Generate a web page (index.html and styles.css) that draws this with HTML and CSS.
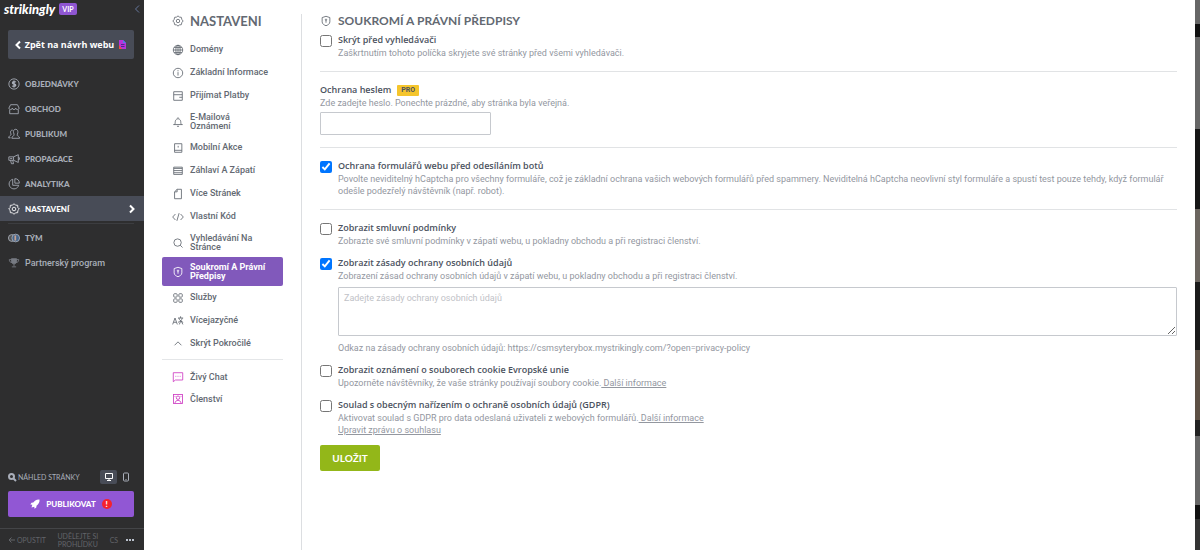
FILE: index.html
```html
<!DOCTYPE html>
<html lang="cs">
<head>
  <meta charset="UTF-8">
  <meta name="viewport" content="width=device-width, initial-scale=1.0">
  <title>Nastavení – Strikingly</title>
  <link rel="stylesheet" href="styles.css">
</head>
<body>
  <div class="app">
    <!-- Sidebar -->
    <aside class="sidebar">
      <div class="brand">
        <span class="logo">strikingly</span>
        <span class="vip">VIP</span>
        <button class="collapse" aria-label="Sbalit">
          <svg width="6" height="10" viewBox="0 0 6 10"><path d="M5 1.500L1.500 5L5 8.500"/></svg>
        </button>
      </div>
      <a class="back" href="#">
        <svg class="arrow" width="6" height="10" viewBox="0 0 6 10"><path d="M5 1.500L1.500 5L5 8.500"/></svg>
        Zpět na návrh webu
        <svg class="page" width="9" height="11" viewBox="0 0 9 11"><path d="M1 1H5L8 4V10H1Z" fill="#b832d8"/><path d="M5 1L8 4H5Z" fill="#4d7ff0"/><path d="M1 6L4 10H1Z" fill="#f0503c"/><path d="M3 5H6.500V6H3ZM3 7H6.500V8H3Z" fill="#4a2a90"/></svg>
      </a>
      <nav class="menu">
        <a href="#"><svg class="ico" viewBox="0 0 14 14"><circle cx="7" cy="7" r="6"/><path stroke-width="1.600" d="M9 5C8.500 4 5.200 3.900 5.200 5.700C5.200 7.400 9 6.600 9 8.400C9 10.200 5.500 10 5 9M7 3V11"/></svg>OBJEDNÁVKY</a>
        <a href="#"><svg class="ico" viewBox="0 0 14 14"><path d="M3 2H11L13 6C13 8.200 9 8.200 9 6C9 8.200 5 8.200 5 6C5 8.200 1 8.200 1 6ZM2 8V12.500H12V8"/></svg>OBCHOD</a>
        <a href="#"><svg class="ico" viewBox="0 0 14 14"><path d="M9 1.500C6.500 1.500 6 4 6.500 5.500C7 7 7.300 7.300 7 8.500C6.500 9.500 4.500 9.500 4.500 12H13.500C13.500 9.500 11 9.500 10.700 8.500C10.500 7.500 11.300 7 11.500 5.500C11.700 3.500 11 1.500 9 1.500M5.500 2.500C3.500 2.200 2.700 4 3 5.500C3.200 6.700 3.700 7 3.500 8C3 9 1 9 .8 11.500H3"/></svg>PUBLIKUM</a>
        <a href="#"><svg class="ico" viewBox="0 0 14 14"><path d="M1 4.500H6.500L12 2V11L6.500 8.500H1ZM6.500 4.500V8.500M3 8.500L4 12.500H6.500L5.500 8.500M12 5.500H13.300V7.500H12M2.500 6.500H5"/></svg>PROPAGACE</a>
        <a href="#"><svg class="ico" viewBox="0 0 14 14"><path d="M5.500 1.500A5.700 5.700 0 1 0 12.500 8.500H5.500ZM8 .8V6H13.200A5.300 5.300 0 0 0 8 .8"/></svg>ANALYTIKA</a>
        <a class="active" href="#"><svg class="ico" viewBox="0 0 14 14"><path d="M7 .8L8.700 2.500L11.300 2.700L11.500 5.300L13.200 7L11.500 8.700L11.300 11.300L8.700 11.500L7 13.200L5.300 11.500L2.700 11.300L2.500 8.700L.8 7L2.500 5.300L2.700 2.700L5.300 2.500Z"/><circle cx="7" cy="7" r="2.100"/></svg>NASTAVENÍ<svg class="arrow" width="6" height="10" viewBox="0 0 6 10"><path d="M1 1.500L4.500 5L1 8.500"/></svg></a>
      </nav>
      <nav class="menu team">
        <a href="#"><svg class="ico" viewBox="0 0 14 14"><circle cx="4.500" cy="7" r="4" fill="#555"/><circle cx="9" cy="7" r="4.500" fill="#45668c"/><path stroke="#c9a18e" stroke-width="2" d="M8.500 4V10"/></svg>TÝM</a>
        <a class="plain" href="#"><svg class="ico dim" viewBox="0 0 14 14"><path fill="#777b83" d="M4 2H10V5C10 9 4 9 4 5Z"/><path d="M4 3H1.500C1.500 5.500 3 6.500 4.500 6.500M10 3H12.500C12.500 5.500 11 6.500 9.500 6.500M7 8V11M4.500 11.500H9.500"/></svg>Partnerský program</a>
      </nav>
      <div class="bottom">
        <div class="preview">
          <svg class="search" width="9" height="9" viewBox="0 0 9 9"><circle cx="3.500" cy="3.500" r="2.500"/><path d="M5.500 5.500L8 8"/></svg>
          <span>NÁHLED STRÁNKY</span>
          <button class="device on" aria-label="Počítač"><svg width="10" height="10" viewBox="0 0 10 10"><path d="M1.500 1.500H8.500V6.500H1.500ZM3 8.500H7M5 6.500V8.500"/></svg></button>
          <button class="device" aria-label="Mobil"><svg width="8" height="10" viewBox="0 0 8 10"><rect x="1.500" y="1" width="5" height="8" rx="1"/><path d="M3.500 7.500H4.500"/></svg></button>
        </div>
        <button class="publish">
          <svg width="10" height="10" viewBox="0 0 10 10"><path fill="#fff" d="M9.500 .5C6 .3 4.500 2 3.300 3.500L1.500 3.700L.3 5.500L2.300 5.700L1.500 8.500L4.300 7.700L4.500 9.700L6.300 8.500L6.500 6.700C8.500 5 9.800 3.500 9.500 .5Z"/></svg>
          PUBLIKOVAT
          <span class="alert">!</span>
        </button>
      </div>
      <footer class="footer">
        <a class="leave" href="#"><svg width="7" height="8" viewBox="0 0 7 8"><path d="M7 4H1M3.500 1.500L1 4L3.500 6.500"/></svg>OPUSTIT</a>
        <a class="tour" href="#">UDĚLEJTE SI PROHLÍDKU</a>
        <a href="#">CS</a>
        <button class="more" aria-label="Více"><i></i><i></i><i></i></button>
      </footer>
    </aside>

    <!-- Settings navigation -->
    <nav class="settings">
      <h2><svg class="ico" viewBox="0 0 14 14"><path d="M7 1L8.600 2.400L10.900 2.700L11.500 5.200L13 7L11.500 8.800L10.900 11.300L8.600 11.600L7 13L5.400 11.600L3.100 11.300L2.500 8.800L1 7L2.500 5.200L3.100 2.700L5.400 2.400Z"/><circle cx="7" cy="7" r="2"/></svg>NASTAVENI</h2>
      <ul>
        <li><a href="#"><svg class="ico" viewBox="0 0 14 14"><circle cx="7" cy="7" r="5.500"/><ellipse cx="7" cy="7" rx="2.500" ry="5.500"/><path d="M7 1.500V12.500M1.500 7H12.500M2.500 4H11.500M2.500 10H11.500"/></svg>Domény</a></li>
        <li><a href="#"><svg class="ico" viewBox="0 0 14 14"><circle cx="7" cy="7" r="5.500"/><path d="M7 6V10M7 3.700V5"/></svg>Základní Informace</a></li>
        <li><a href="#"><svg class="ico" viewBox="0 0 14 14"><path d="M2 2H12V12H2ZM2 5.500H12M12 8.500H8.500"/></svg>Přijímat Platby</a></li>
        <li class="double"><a href="#"><svg class="ico" viewBox="0 0 14 14"><path d="M1.500 10H12.500M3 10C4 9 3.500 7 4 5.500C5 2.500 9 2.500 10 5.500C10.500 7 10 9 11 10M7 1.500V3M5.800 12H8.200"/></svg>E-Mailová<br>Oznámení</a></li>
        <li><a href="#"><svg class="ico" viewBox="0 0 14 14"><path d="M3 2H11.500V12H3ZM3 9.700H11.500M7.200 4.500V6.500"/></svg>Mobilní Akce</a></li>
        <li><a href="#"><svg class="ico" viewBox="0 0 14 14"><path d="M2 2.500H12V11H2ZM2 4H12M2 6.500H12M2 9H12"/></svg>Záhlaví A Zápatí</a></li>
        <li><a href="#"><svg class="ico" viewBox="0 0 14 14"><path d="M6 1.500H11V12.500H3V4.500ZM3 4.500H6V1.500"/></svg>Více Stránek</a></li>
        <li><a href="#"><svg class="ico" viewBox="0 0 14 14"><path d="M4 3.500L.8 7L4 10.500M10 3.500L13.200 7L10 10.500M8.300 2.500L5.700 11.500"/></svg>Vlastní Kód</a></li>
        <li class="double"><a href="#"><svg class="ico" viewBox="0 0 14 14"><circle cx="6.500" cy="6.500" r="4.300"/><path d="M9.600 9.600L12.300 12.300"/></svg>Vyhledávání Na<br>Stránce</a></li>
        <li class="double active"><a href="#"><svg class="ico" viewBox="0 0 14 14"><path d="M7 1.500L11.500 3V8C11.500 10.500 9 11.800 7 12.500C5 11.800 2.500 10.500 2.500 8V3ZM7 6V9"/><circle cx="7" cy="5.500" r=".8"/></svg>Soukromí A Právní<br>Předpisy</a></li>
        <li><a href="#"><svg class="ico" viewBox="0 0 14 14"><rect x="2" y="2" width="4" height="4" rx="1"/><rect x="8" y="2" width="4" height="4" rx="1"/><rect x="2" y="8" width="4" height="4" rx="1"/><rect x="8" y="8" width="4" height="4" rx="1"/></svg>Služby</a></li>
        <li><a href="#"><svg class="ico" viewBox="0 0 14 14"><path d="M.8 11L3.500 3.500L6.200 11M1.800 8.500H5.200M7 3.500H13M10 1.500V3.500M8 3.500C8.500 6 11 8 13 8.500M12 3.500C11.500 6 9 8 7 8.500M8.500 11L10.500 6.500L12.700 11"/></svg>Vícejazyčné</a></li>
        <li><a href="#"><svg class="ico" viewBox="0 0 14 14"><path d="M3 8.500L7 4.500L11 8.500"/></svg>Skrýt Pokročilé</a></li>
      </ul>
      <ul class="extra">
        <li><a href="#"><svg class="ico pink" viewBox="0 0 14 14"><path d="M1.500 2H12.500V10.500H4L1.500 12.500ZM4 6.200H5M6.500 6.200H7.500M9 6.200H10"/></svg>Živý Chat</a></li>
        <li><a href="#"><svg class="ico pink" viewBox="0 0 14 14"><rect x="1.700" y="1.700" width="10.600" height="10.600"/><circle cx="7" cy="5.500" r="2"/><path d="M3.500 12C3.500 7.500 10.500 7.500 10.500 12M3 4H4M10 4H11"/></svg>Členství</a></li>
      </ul>
    </nav>

    <!-- Page content -->
    <main class="content">
      <h1><svg class="ico" viewBox="0 0 14 14"><path d="M7 1.500L11.500 3V8C11.500 10.500 9 11.800 7 12.500C5 11.800 2.500 10.500 2.500 8V3ZM7 6V9"/><circle cx="7" cy="5.500" r=".8"/></svg>SOUKROMÍ A PRÁVNÍ PŘEDPISY</h1>
      <form>
        <section>
          <div class="option">
            <input type="checkbox" id="hide">
            <div class="text">
              <label for="hide">Skrýt před vyhledávači</label>
              <p>Zaškrtnutím tohoto políčka skryjete své stránky před všemi vyhledávači.</p>
            </div>
          </div>
        </section>
        <section>
          <div class="row"><label for="password">Ochrana heslem</label><span class="pro">PRO</span></div>
          <p>Zde zadejte heslo. Ponechte prázdné, aby stránka byla veřejná.</p>
          <input type="password" class="password" id="password">
        </section>
        <section>
          <div class="option">
            <input type="checkbox" id="captcha" checked>
            <div class="text">
              <label for="captcha">Ochrana formulářů webu před odesíláním botů</label>
              <p>Povolte neviditelný hCaptcha pro všechny formuláře, což je základní ochrana vašich webových formulářů před spammery. Neviditelná hCaptcha neovlivní styl formuláře a spustí test pouze tehdy, když formulář odešle podezřelý návštěvník (např. robot).</p>
            </div>
          </div>
        </section>
        <section>
          <div class="option">
            <input type="checkbox" id="terms">
            <div class="text">
              <label for="terms">Zobrazit smluvní podmínky</label>
              <p>Zobrazte své smluvní podmínky v zápatí webu, u pokladny obchodu a při registraci členství.</p>
            </div>
          </div>
          <div class="option">
            <input type="checkbox" id="privacy" checked>
            <div class="text">
              <label for="privacy">Zobrazit zásady ochrany osobních údajů</label>
              <p>Zobrazení zásad ochrany osobních údajů v zápatí webu, u pokladny obchodu a při registraci členství.</p>
              <textarea aria-label="Zásady ochrany osobních údajů" placeholder="Zadejte zásady ochrany osobních údajů"></textarea>
              <p>Odkaz na zásady ochrany osobních údajů: https://csmsyterybox.mystrikingly.com/?open=privacy-policy</p>
            </div>
          </div>
          <div class="option">
            <input type="checkbox" id="cookie">
            <div class="text">
              <label for="cookie">Zobrazit oznámení o souborech cookie Evropské unie</label>
              <p>Upozorněte návštěvníky, že vaše stránky používají soubory cookie.<a href="#">&nbsp;Další informace</a></p>
            </div>
          </div>
          <div class="option">
            <input type="checkbox" id="gdpr">
            <div class="text">
              <label for="gdpr">Soulad s obecným nařízením o ochraně osobních údajů (GDPR)</label>
              <p>Aktivovat soulad s GDPR pro data odeslaná uživateli z webových formulářů.<a href="#">&nbsp;Další informace</a></p>
              <p><a href="#">Upravit zprávu o souhlasu</a></p>
            </div>
          </div>
        </section>
        <button type="submit" class="save">ULOŽIT</button>
      </form>
    </main>

    <!-- Edge of the site behind the panel -->
    <div class="site-edge"></div>
  </div>
</body>
</html>
```
FILE: styles.css
```css
* {
  box-sizing: border-box;
}
body {
  margin: 0;
  font-family: Roboto, "Open Sans", sans-serif;
  font-size: 9px;
  line-height: 12px;
  color: #4b525e;
  background: #fff;
}
a {
  color: inherit;
  text-decoration: none;
}
button {
  padding: 0;
  border: none;
  background: none;
  color: inherit;
  font-family: Lato, sans-serif;
  cursor: pointer;
}
h1, h2, p, ul {
  margin: 0;
  padding: 0;
}
svg {
  flex: none;
  fill: none;
  stroke: currentColor;
}
.app {
  display: flex;
  min-height: 100vh;
}
.ico {
  width: 12px;
  height: 12px;
}

/* Sidebar */
.sidebar {
  display: flex;
  flex-direction: column;
  flex: none;
  width: 144px;
  background: #2e2e2f;
  color: #a9aeb9;
  font-family: Lato, sans-serif;
}
.brand {
  display: flex;
  align-items: center;
  height: 18px;
  padding: 0 4px;
  color: #fff;
}
.logo {
  font-size: 13px;
  font-style: italic;
  font-weight: 900;
}
.vip {
  margin-left: 4px;
  padding: 0 3px;
  border-radius: 2px;
  background: #8f56d2;
  font-size: 7px;
  font-weight: 700;
}
.collapse {
  display: flex;
  margin-left: auto;
  color: #66779c;
}
.back {
  display: flex;
  align-items: center;
  justify-content: center;
  gap: 4px;
  height: 29px;
  margin: 12px 10px 12px 8px;
  border-radius: 2px;
  background: #484c57;
  color: #fff;
  font-family: "Open Sans", sans-serif;
  font-weight: 700;
}
.page {
  stroke: none;
}
.arrow {
  stroke-width: 2;
}
.menu a {
  display: flex;
  align-items: center;
  gap: 5px;
  height: 25px;
  padding: 0 9px 0 8px;
  font-size: 8px;
  font-weight: 900;
}
.menu .active {
  background: #484c57;
  color: #fff;
}
.menu .arrow {
  margin-left: auto;
}
.team {
  margin: 2px 10px 0 8px;
  padding-top: 1px;
  border-top: 1px solid #3c3d40;
}
.menu.team a {
  padding: 0;
}
.menu .plain {
  font-family: Roboto, "Open Sans", sans-serif;
  font-size: 9px;
  font-weight: 500;
}
.dim {
  color: #777b83;
}
.bottom {
  margin-top: auto;
  padding: 0 10px 11px 8px;
}
.preview {
  display: flex;
  align-items: center;
  height: 14px;
  margin-bottom: 7px;
  font-size: 7px;
}
.preview span {
  margin: 0 auto 0 1px;
}
.search {
  stroke-width: 2;
}
.device {
  display: flex;
  align-items: center;
  justify-content: center;
  width: 17px;
  height: 14px;
  border-radius: 2px;
}
.device.on {
  background: #484c57;
  color: #fff;
}
.publish {
  display: flex;
  align-items: center;
  justify-content: center;
  gap: 6px;
  width: 100%;
  height: 26px;
  border-radius: 2px;
  background: #9157d4;
  color: #fff;
  font-size: 8px;
  font-weight: 900;
}
.publish svg {
  stroke: none;
}
.alert {
  width: 10px;
  height: 10px;
  border-radius: 50%;
  background: #f5222d;
  line-height: 10px;
}
.footer {
  display: flex;
  align-items: center;
  justify-content: space-between;
  height: 22px;
  padding: 0 10px 0 8px;
  border-top: 1px solid #444548;
  color: #626469;
  font-size: 7px;
  line-height: 8px;
}
.leave {
  display: flex;
  gap: 2px;
}
.tour {
  width: 48px;
  text-align: center;
}
.more {
  display: flex;
  gap: 1px;
}
.more i {
  width: 2px;
  height: 2px;
  background: #b9c0cc;
}

/* Settings navigation */
.settings {
  flex: none;
  width: 158px;
  margin-top: 14px;
  padding: 0 18px;
  border-right: 1px solid #dcdee1;
  color: #636972;
}
.settings h2 {
  display: flex;
  align-items: center;
  gap: 6px;
  height: 14px;
  margin-bottom: 10px;
  padding-left: 10px;
  font-family: Lato, sans-serif;
  font-size: 13px;
  font-weight: 700;
}
.settings ul {
  list-style: none;
}
.settings li a {
  display: flex;
  align-items: center;
  gap: 6px;
  height: 23px;
  padding-left: 10px;
  font-weight: 500;
  line-height: 9px;
}
.settings .double a {
  height: 29px;
}
.settings .active a {
  border-radius: 2px;
  background: #8159bb;
  color: #fff;
  font-weight: 700;
}
.extra {
  margin-top: 4px;
  padding-top: 6px;
  border-top: 1px solid #e4e6e8;
}
.settings .extra a {
  height: 22px;
}
.pink {
  color: #cf3fc4;
}

/* Page content */
.content {
  flex: 1;
  padding: 14px 18px;
}
.content h1 {
  display: flex;
  align-items: center;
  gap: 6px;
  height: 14px;
  margin-bottom: 6px;
  color: #636972;
  font-family: Lato, sans-serif;
  font-size: 12px;
  font-weight: 700;
}
section + section {
  margin-top: 12px;
  padding-top: 12px;
  border-top: 1px solid #e1e3e5;
}
.option {
  display: flex;
  align-items: flex-start;
  gap: 6px;
}
.option + .option {
  margin-top: 10px;
}
.option input {
  flex: none;
  width: 12px;
  height: 12px;
  margin: 1px 0 0;
}
.text {
  flex: 1;
}
label {
  font-family: "Open Sans", sans-serif;
  font-weight: 600;
}
.text label {
  display: block;
  margin-bottom: 1px;
}
.content p {
  color: #93979f;
}
.content p a {
  text-decoration: underline;
}
.row {
  display: flex;
  align-items: center;
  gap: 6px;
  margin-bottom: 1px;
}
.pro {
  padding: 0 4px;
  border-radius: 1px;
  background: #f5c52c;
  font-size: 7px;
  font-weight: 700;
  line-height: 11px;
}
.password {
  display: block;
  width: 171px;
  height: 23px;
  margin-top: 3px;
  border: 1px solid #c6c9ce;
  border-radius: 1px;
}
textarea {
  display: block;
  width: 100%;
  height: 49px;
  margin: 5px 0 6px;
  padding: 4px 5px;
  border: 1px solid #c6c9ce;
  border-radius: 1px;
  font: inherit;
}
textarea::placeholder {
  color: #bfc2c7;
}
.save {
  width: 60px;
  height: 26px;
  margin-top: 9px;
  border-radius: 2px;
  background: #93b719;
  color: #fff;
  font-size: 10px;
  font-weight: 700;
}
.site-edge {
  flex: none;
  width: 5px;
  background: linear-gradient(#666 24px, #111 24px 37px, #666 37px 129px, #161616 129px 209px, #6b655f 209px 282px, #1b1b1b 282px 350px, #5d5045 350px 420px, #222 420px 436px, #666 436px 505px, #111 505px 519px, #333 519px);
}
```
